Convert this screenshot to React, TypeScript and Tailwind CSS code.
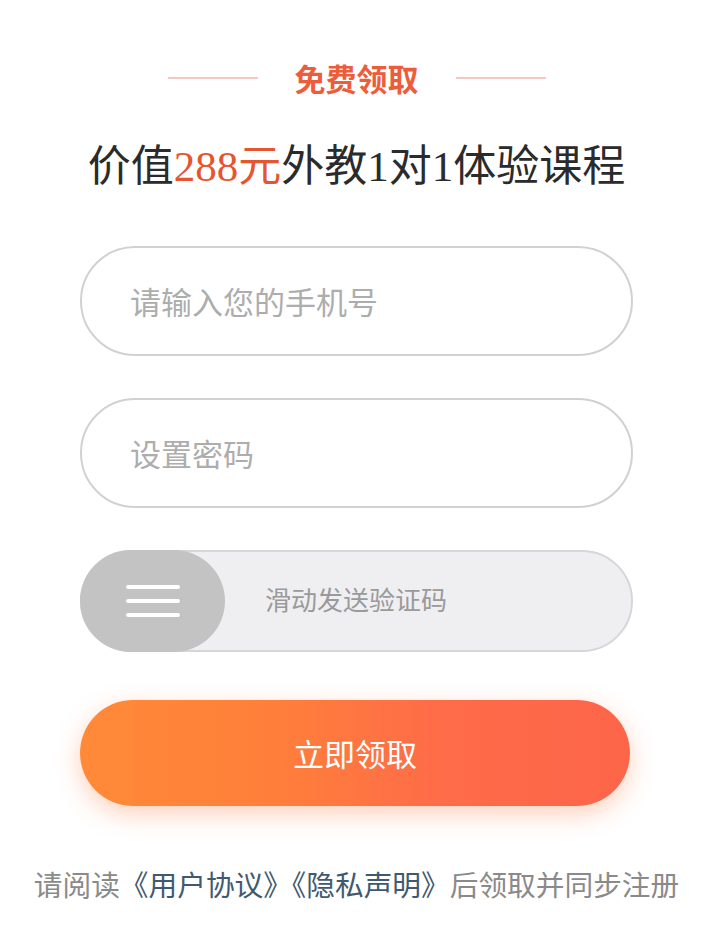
import React from "react";

export default function App() {
  const sans = { fontFamily: '"Noto Sans CJK SC", "Noto Sans", sans-serif' };
  const tc = { fontFamily: '"Noto Sans CJK TC", sans-serif' };
  return (
    <div className="min-h-[937px] w-[724px] bg-white">
      <div className="w-[713px] flex flex-col items-center">
        {/* header */}
        <div className="mt-[58px] flex items-center h-[40px]">
          <div className="w-[90px] h-[2px] bg-[#f3c9c0]" />
          <div
            className="mx-[37px] text-[31px] leading-[40px] font-bold text-[#ec5d3c]"
            style={sans}
          >
            免费领取
          </div>
          <div className="w-[90px] h-[2px] bg-[#f3c9c0]" />
        </div>

        <div
          className="mt-[41px] text-[43px] leading-[56px] text-[#2b2b2b]"
          style={{ fontFamily: '"Liberation Serif", "Noto Sans CJK SC", serif' }}
        >
          价值<span className="text-[#e5552f]">288元</span>外教1对1体验课程
        </div>

        {/* fields */}
        <div className="mt-[51px] w-[553px] flex flex-col">
          <div className="h-[110px] rounded-full border-2 border-[#d2d0d4] flex items-center pl-[48px]">
            <span className="text-[31px] text-[#adadad]" style={sans}>
              请输入您的手机号
            </span>
          </div>
          <div className="mt-[42px] h-[110px] rounded-full border-2 border-[#d2d0d4] flex items-center pl-[48px]">
            <span className="text-[31px] text-[#adadad]" style={sans}>
              设置密码
            </span>
          </div>

          <div className="mt-[42px] h-[102px] rounded-full border-2 border-[#d6d5d8] bg-[#efeef1] flex items-center relative">
            <div className="absolute -left-[2px] -top-[2px] w-[145px] h-[102px] rounded-full bg-[#c3c3c3] flex flex-col items-center justify-center gap-[10px]">
              <div className="w-[54px] h-[4px] rounded-full bg-white" />
              <div className="w-[54px] h-[4px] rounded-full bg-white" />
              <div className="w-[54px] h-[4px] rounded-full bg-white" />
            </div>
            <span
              className="ml-[183px] text-[26px] text-[#9a9a9a]"
              style={{ fontFamily: '"Liberation Serif", "Noto Sans CJK SC", serif' }}
            >
              滑动发送验证码
            </span>
          </div>

          <div className="mt-[48px] w-[550px] h-[106px] rounded-full bg-[linear-gradient(90deg,#ff8a38_0%,#ff7f3a_35%,#fe6c48_65%,#fd654a_100%)] shadow-[0_8px_24px_rgba(255,120,60,0.35)] flex items-center justify-center">
            <span className="text-[31px] text-white" style={sans}>
              立即领取
            </span>
          </div>
        </div>

        <div
          className="mt-[58px] text-[28.7px] leading-[40px] text-[#8a8a8a] whitespace-nowrap"
          style={{ fontFamily: '"Liberation Serif", "Noto Sans CJK SC", serif' }}
        >
          请阅读
          <span className="text-[#3f5a70]">
            <span style={tc}>《</span>用户协议<span style={tc}>》</span>
            <span style={tc}>《</span>隐私声明<span style={tc}>》</span>
          </span>
          后领取并同步注册
        </div>
      </div>
    </div>
  );
}
